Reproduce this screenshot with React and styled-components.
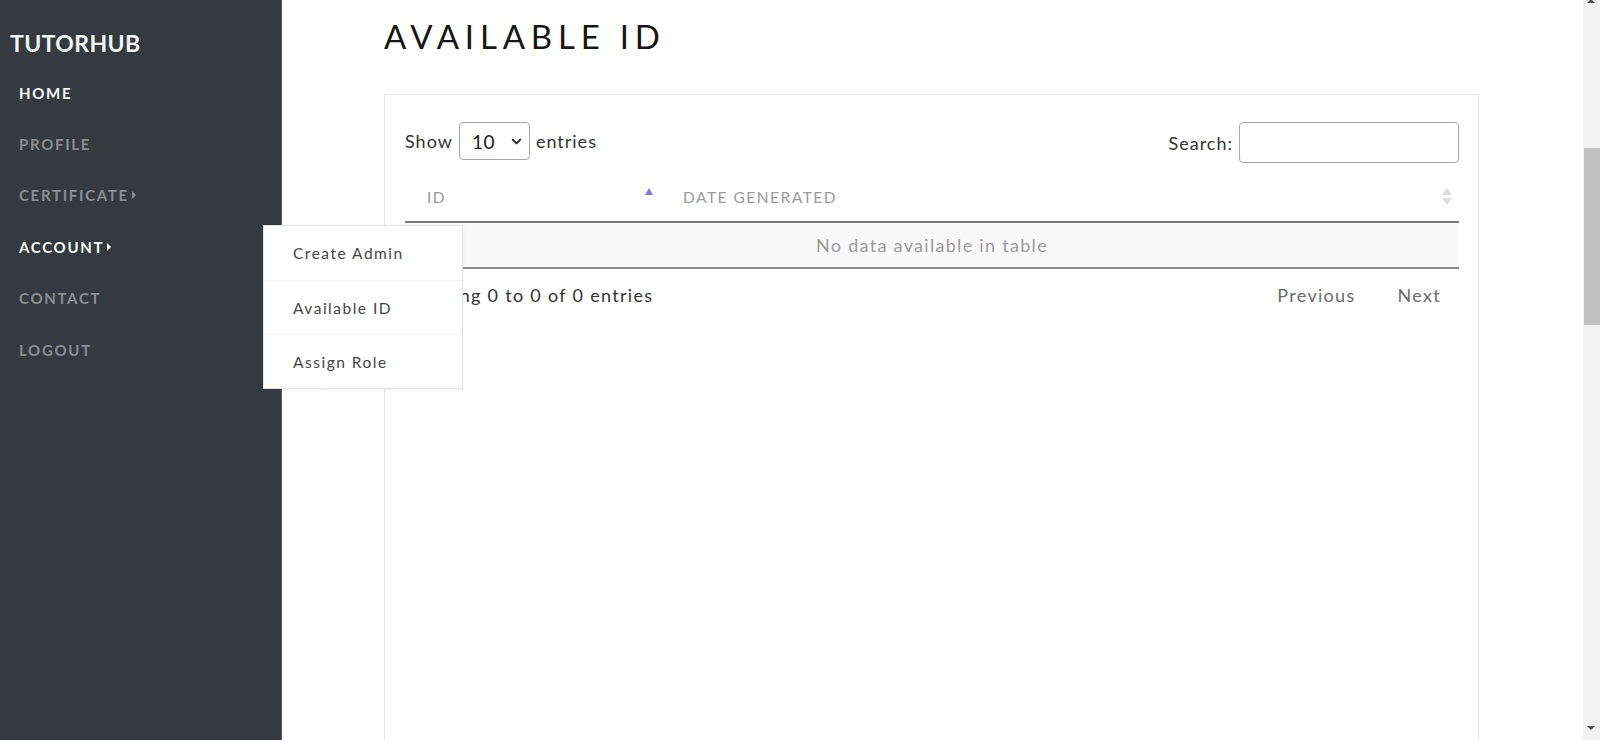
import styled, { createGlobalStyle } from "styled-components";
import { ChevronDown } from "lucide-react";

const GlobalStyle = createGlobalStyle`
  html, body {
    margin: 0;
    padding: 0;
    background: #fff;
    font-family: Lato, "Noto Sans", sans-serif;
  }
  * { box-sizing: border-box; }
`;

const Page = styled.div`
  display: flex;
  min-height: 100vh;
  padding-right: 17px;
`;

const Sidebar = styled.aside`
  width: 282px;
  flex-shrink: 0;
  height: 100vh;
  position: sticky;
  top: 0;
  background: #343a40;
  border-right: 1px solid #5b6066;
  padding-top: 28px;
  z-index: 2;
`;

const Brand = styled.a`
  display: block;
  padding-left: 10px;
  color: #f3f4f5;
  font-size: 23px;
  font-weight: 700;
  letter-spacing: 0.4px;
  line-height: 30px;
  text-decoration: none;
`;

const NavList = styled.ul`
  list-style: none;
  margin: 9px 0 0;
  padding: 0;
`;

const NavItem = styled.li`
  position: relative;
  height: 51.4px;
  display: flex;
  align-items: center;
`;

const NavLink = styled.a`
  padding-left: 19px;
  color: ${(p) => (p.$active ? "#f8f9fa" : "#8a8e93")};
  font-size: 15px;
  font-weight: 700;
  letter-spacing: 1.7px;
  text-decoration: none;
  display: flex;
  align-items: center;
  gap: 3px;
`;

const Caret = styled.span`
  width: 0;
  height: 0;
  border-top: 4px solid transparent;
  border-bottom: 4px solid transparent;
  border-left: 4px solid currentColor;
`;

const Dropdown = styled.div`
  position: absolute;
  left: 263px;
  top: 4px;
  width: 200px;
  background: #fff;
  border: 1px solid #e3e3e3;
  box-shadow: 0 1px 3px rgba(0, 0, 0, 0.06);
`;

const DropItem = styled.a`
  display: flex;
  align-items: center;
  height: 54px;
  padding-left: 29px;
  color: #454545;
  font-size: 15.5px;
  letter-spacing: 1.5px;
  text-decoration: none;
  & + & {
    border-top: 1px solid #f1f1f1;
  }
`;

const Main = styled.main`
  flex: 1;
  padding: 0 104px 0 102px;
`;

const Title = styled.h1`
  margin: 16px 0 38px;
  font-size: 33px;
  line-height: 40px;
  font-weight: 400;
  letter-spacing: 5.8px;
  color: #161616;
`;

const Card = styled.section`
  border: 1px solid #e5e5e5;
  border-bottom: none;
  padding: 27px 19px 0 20px;
  min-height: 1400px;
`;

const Controls = styled.div`
  display: flex;
  justify-content: space-between;
  align-items: flex-start;
  height: 51px;
`;

const Label = styled.label`
  display: flex;
  align-items: center;
  gap: 6px;
  color: #333;
  font-size: 18px;
  letter-spacing: 1px;
  height: ${(p) => p.$h}px;
`;

const SelectBox = styled.div`
  position: relative;
  width: 71px;
  height: 38px;
  border: 1px solid #a9a9a9;
  border-radius: 4px;
  display: flex;
  align-items: center;
  padding-left: 12px;
  font-size: 19px;
  letter-spacing: 0.5px;
  color: #222;
  svg {
    position: absolute;
    right: 5px;
    top: 11px;
  }
`;

const SearchInput = styled.input`
  width: 220px;
  height: 41px;
  border: 1px solid #a9a9a9;
  border-radius: 4px;
  outline: none;
`;

const Table = styled.table`
  width: 100%;
  border-collapse: collapse;
`;

const Th = styled.th`
  position: relative;
  height: 49px;
  text-align: left;
  padding: 0 0 0 ${(p) => p.$pl}px;
  width: ${(p) => p.$w || "auto"};
  font-size: 15.5px;
  font-weight: 400;
  letter-spacing: 1.5px;
  color: #9a9a9a;
  border-bottom: 2px solid #7a7a7a;
`;

const SortUp = styled.span`
  position: absolute;
  right: 8px;
  top: 15px;
  width: 0;
  height: 0;
  border-left: 4.5px solid transparent;
  border-right: 4.5px solid transparent;
  border-bottom: 7px solid #7b7be0;
`;

const SortBoth = styled.span`
  position: absolute;
  right: 7px;
  top: 15px;
  display: flex;
  flex-direction: column;
  gap: 3px;
  &::before,
  &::after {
    content: "";
    width: 0;
    height: 0;
    border-left: 5px solid transparent;
    border-right: 5px solid transparent;
  }
  &::before {
    border-bottom: 7px solid #dcdcdc;
  }
  &::after {
    border-top: 7px solid #dcdcdc;
  }
`;

const EmptyCell = styled.td`
  height: 46px;
  background: #f9f9f9;
  text-align: center;
  color: #9a9a9a;
  font-size: 18px;
  letter-spacing: 1.3px;
  border-bottom: 2px solid #8a8a8a;
`;

const Footer = styled.div`
  display: flex;
  justify-content: space-between;
  align-items: center;
  height: 52px;
  color: #333;
  font-size: 18px;
  letter-spacing: 1.3px;
`;

const Pager = styled.div`
  display: flex;
  padding-right: 18px;
`;

const PageButton = styled.a`
  color: #6b6b6b;
  padding: 0 0 0 ${(p) => p.$pl}px;
  letter-spacing: 1.3px;
`;

const Scrollbar = styled.div`
  position: fixed;
  top: 0;
  right: 0;
  width: 17px;
  height: 100vh;
  background: #f1f1f1;
  z-index: 5;
`;

const ScrollThumb = styled.div`
  position: absolute;
  top: 148px;
  left: 1px;
  right: 0;
  height: 177px;
  background: #c1c1c1;
`;

const ScrollArrow = styled.span`
  position: absolute;
  left: 4px;
  width: 0;
  height: 0;
  border-left: 4px solid transparent;
  border-right: 4px solid transparent;
  ${(p) =>
    p.$down
      ? "bottom: 10px; border-top: 4px solid #505050;"
      : "top: -1px; border-bottom: 4px solid #505050;"}
`;

const navItems = [
  { label: "HOME", active: true },
  { label: "PROFILE" },
  { label: "CERTIFICATE", caret: true },
  { label: "ACCOUNT", caret: true, active: true, open: true },
  { label: "CONTACT" },
  { label: "LOGOUT" },
];

export default function App() {
  return (
    <>
      <GlobalStyle />
      <Page>
        <Sidebar>
          <Brand href="#">TUTORHUB</Brand>
          <NavList>
            {navItems.map((item) => (
              <NavItem key={item.label}>
                <NavLink href="#" $active={item.active}>
                  {item.label}
                  {item.caret && <Caret />}
                </NavLink>
                {item.open && (
                  <Dropdown>
                    <DropItem href="#">Create Admin</DropItem>
                    <DropItem href="#">Available ID</DropItem>
                    <DropItem href="#">Assign Role</DropItem>
                  </Dropdown>
                )}
              </NavItem>
            ))}
          </NavList>
        </Sidebar>
        <Main>
          <Title>AVAILABLE ID</Title>
          <Card>
            <Controls>
              <Label $h={38}>
                Show
                <SelectBox>
                  10
                  <ChevronDown size={15} strokeWidth={3} />
                </SelectBox>
                entries
              </Label>
              <Label $h={41}>
                Search:
                <SearchInput type="text" />
              </Label>
            </Controls>
            <Table>
              <thead>
                <tr>
                  <Th $pl={22} $w="256px">
                    ID
                    <SortUp />
                  </Th>
                  <Th $pl={22}>
                    DATE GENERATED
                    <SortBoth />
                  </Th>
                </tr>
              </thead>
              <tbody>
                <tr>
                  <EmptyCell colSpan={2}>No data available in table</EmptyCell>
                </tr>
              </tbody>
            </Table>
            <Footer>
              <span>Showing 0 to 0 of 0 entries</span>
              <Pager>
                <PageButton $pl={0}>Previous</PageButton>
                <PageButton $pl={42}>Next</PageButton>
              </Pager>
            </Footer>
          </Card>
        </Main>
      </Page>
      <Scrollbar>
        <ScrollArrow />
        <ScrollThumb />
        <ScrollArrow $down />
      </Scrollbar>
    </>
  );
}
